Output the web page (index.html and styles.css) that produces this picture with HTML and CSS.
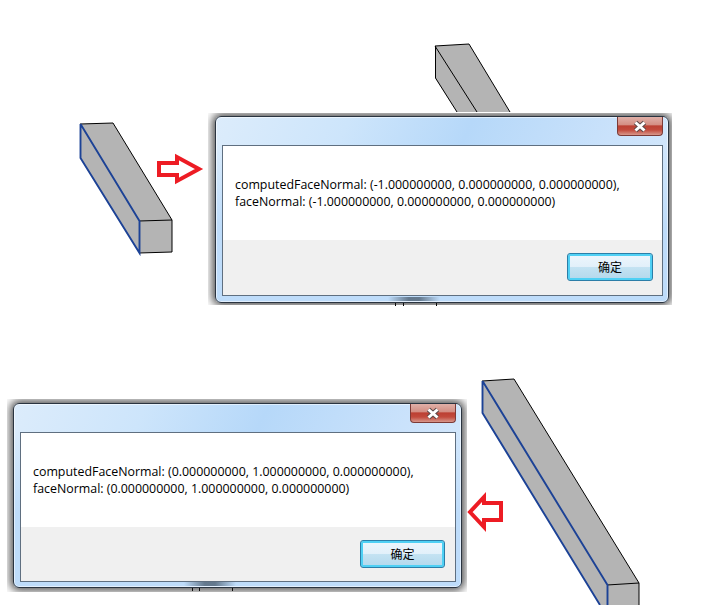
FILE: index.html
```html
<!DOCTYPE html>
<html lang="zh">
<head>
    <meta charset="UTF-8">
    <meta name="viewport" content="width=device-width, initial-scale=1.0">
    <title>faceNormal</title>
    <link rel="stylesheet" href="styles.css">
</head>
<body>
    <div class="canvas">
        <svg class="drawing" width="721" height="605" viewBox="0 0 721 605">
            <!-- box behind the first dialog -->
            <polygon class="face" points="435,46 469,44 510,112 457,112 435,78"/>
            <path class="edge" d="M435 46L469 44L510 112M435 46L477 112M435.500 46V78L457 112"/>
            <path class="edge" d="M395.500 303V306M403.500 303V306M436.500 303V306"/>

            <!-- left box -->
            <polygon class="face" points="80,124 113,123 172,220 172,252 139,253 80,158"/>
            <path class="edge" d="M80 124L113 123L172 220V252L139 253M139 221L172 220"/>
            <path class="edge-blue" d="M80.500 124V158L139.500 253V221L80.500 124"/>

            <!-- right box -->
            <polygon class="face" points="482,381 514,379 639,583 639,605 600,605 482,413"/>
            <path class="edge" d="M482 381L514 379L639 583V605M607 585L639 583"/>
            <path class="edge-blue" d="M482.500 381V413L600 605M607.500 605V585L482.500 381"/>

            <path class="edge" d="M192.500 588V591M199.500 588V591M232.500 588V591"/>

            <polygon class="arrow" points="159,163 177,163 177,157 199,169 177,181 177,175 159,175"/>
            <polygon class="arrow" points="470,512 484,497 484,503 501,503 501,520 484,520 484,527"/>
        </svg>

        <div class="shot shot-top">
            <div class="window">
                <div class="close">
                    <svg width="16" height="13" viewBox="0 0 16 13"><path class="close-x-rim" d="M3.500 2.500L12.500 10.500M12.500 2.500L3.500 10.500"/><path class="close-x" d="M3.500 2.500L12.500 10.500M12.500 2.500L3.500 10.500"/></svg>
                </div>
                <div class="client">
                    <div class="message">computedFaceNormal: (-1.000000000, 0.000000000, 0.000000000),<br>faceNormal: (-1.000000000, 0.000000000, 0.000000000)</div>
                    <div class="footer">
                        <div class="button">确定</div>
                    </div>
                </div>
                <div class="smudge"></div>
            </div>
        </div>

        <div class="shot shot-bottom">
            <div class="window">
                <div class="close">
                    <svg width="16" height="13" viewBox="0 0 16 13"><path class="close-x-rim" d="M3.500 2.500L12.500 10.500M12.500 2.500L3.500 10.500"/><path class="close-x" d="M3.500 2.500L12.500 10.500M12.500 2.500L3.500 10.500"/></svg>
                </div>
                <div class="client">
                    <div class="message">computedFaceNormal: (0.000000000, 1.000000000, 0.000000000),<br>faceNormal: (0.000000000, 1.000000000, 0.000000000)</div>
                    <div class="footer">
                        <div class="button">确定</div>
                    </div>
                </div>
                <div class="smudge"></div>
            </div>
        </div>
    </div>
</body>
</html>
```

FILE: styles.css
```css
body {
    margin: 0;
    background-color: #ffffff;
    font-family: "Open Sans", "Noto Sans CJK SC", sans-serif;
    font-size: 12.4px;
    color: #000000;
}

.canvas {
    position: relative;
    width: 721px;
    height: 605px;
    overflow: hidden;
}

.drawing {
    position: absolute;
    left: 0;
    top: 0;
}

.face {
    fill: #b4b4b4;
}

.edge {
    fill: none;
    stroke: #000000;
    stroke-width: 1;
}

.edge-blue {
    fill: none;
    stroke: #1c4296;
    stroke-width: 1.9;
}

.arrow {
    fill: #ffffff;
    stroke: #ed1c24;
    stroke-width: 4;
}

/* the captured window, shadow cut off at the capture edge */
.shot {
    position: absolute;
    overflow: hidden;
}

.shot-top {
    left: 208px;
    top: 113px;
    width: 464px;
    height: 192px;
    padding: 3px 0 0 7px;
    box-sizing: border-box;
}

.shot-top .window {
    width: 454px;
    height: 187px;
}

.shot-top .footer {
    padding-right: 9px;
}

.shot-top .smudge {
    left: 172px;
}

.shot-top .button {
    width: 86px;
}

.shot-bottom {
    left: 7px;
    top: 399px;
    width: 460px;
    height: 193px;
    padding: 4px 0 0 6px;
    box-sizing: border-box;
}

.shot-bottom .window {
    width: 449px;
    height: 185px;
    padding-bottom: 5px;
}

.shot-bottom .footer {
    height: 54px;
}

.shot-bottom .smudge {
    left: 170px;
}

.shot-bottom .button {
    width: 85px;
}

.window {
    position: relative;
    box-sizing: border-box;
    display: flex;
    padding: 28px 5px 6px 6px;
    border: 1px solid #2a3440;
    border-radius: 6px;
    background:
        linear-gradient(to bottom, rgba(190, 220, 250, 0) 15%, #bedcfa 60%),
        linear-gradient(115deg, #dcecfb 0%, #cde5fb 25%, #b6d8f9 48%, #cae2fb 75%, #d9ebfc 100%);
    box-shadow: 0 0 8px 3px rgba(30, 30, 30, 0.75), inset 0 0 0 1px rgba(255, 255, 255, 0.55);
}

.close {
    position: absolute;
    right: 5px;
    top: 0;
    width: 46px;
    height: 19px;
    box-sizing: border-box;
    display: flex;
    justify-content: center;
    align-items: center;
    border: 1px solid #7c3a36;
    border-top: none;
    border-radius: 0 0 4px 4px;
    background: linear-gradient(to bottom, #e0b0a8 0%, #d48f84 42%, #bc4033 50%, #c24a3c 72%, #d8988c 100%);
}

.close-x-rim {
    fill: none;
    stroke: #5a4a4a;
    stroke-width: 5;
}

.close-x {
    fill: none;
    stroke: #ffffff;
    stroke-width: 3;
}

.client {
    flex: 1;
    display: flex;
    flex-direction: column;
    border: 1px solid #5f6f80;
    background-color: #ffffff;
}

.message {
    flex: 1;
    padding: 30px 12px 0;
    line-height: 17px;
    white-space: nowrap;
}

.footer {
    display: flex;
    justify-content: flex-end;
    height: 55px;
    padding: 13px 10px 0 0;
    box-sizing: border-box;
    background-color: #f0f0f0;
}

.button {
    box-sizing: border-box;
    height: 28px;
    display: flex;
    justify-content: center;
    align-items: center;
    font-size: 12px;
    border: 1px solid #2b7ea8;
    border-radius: 3px;
    background: linear-gradient(to bottom, #edf6fc 0%, #e2f0fa 48%, #c3e2f2 52%, #b3d8ec 100%);
    box-shadow: inset 0 0 0 2px #4fd0f4;
}

.smudge {
    position: absolute;
    bottom: 1px;
    width: 52px;
    height: 4px;
    background: linear-gradient(to right, rgba(90, 110, 130, 0), rgba(90, 110, 130, 0.9) 40%, rgba(90, 110, 130, 0.9) 60%, rgba(90, 110, 130, 0));
}
```
